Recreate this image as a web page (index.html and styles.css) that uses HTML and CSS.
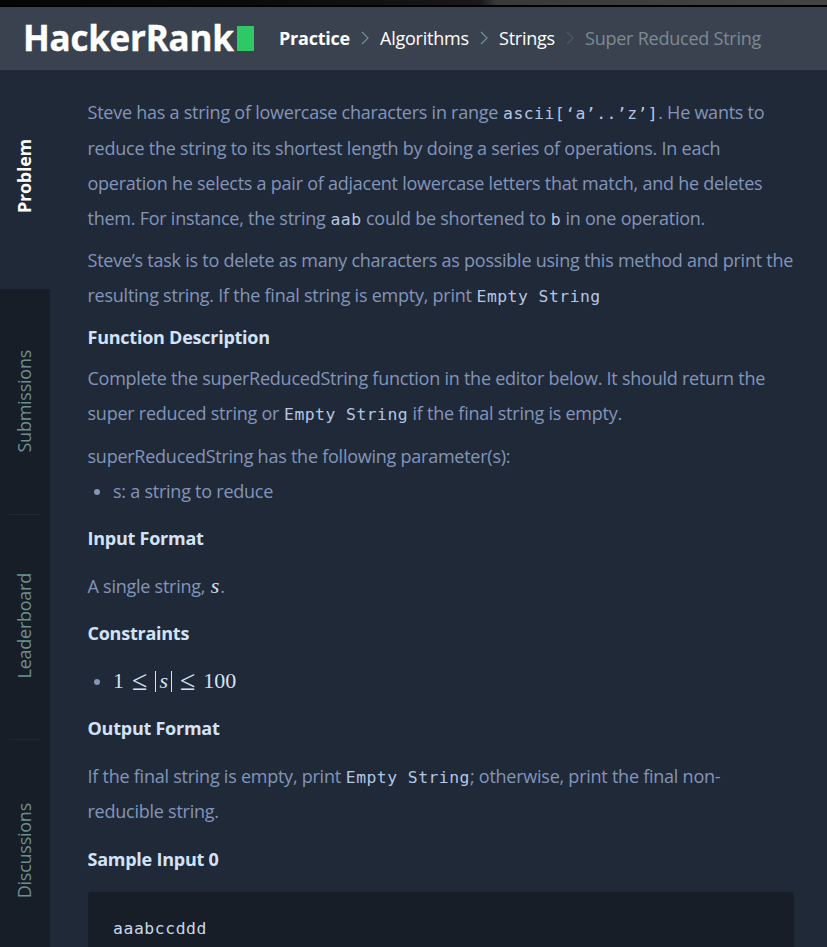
FILE: index.html
```html
<!DOCTYPE html>
<html lang="en">
<head>
<meta charset="utf-8">
<title>Super Reduced String</title>
<link rel="stylesheet" href="styles.css">
</head>
<body>
<div class="window-edge"></div>
<header class="topbar">
  <div class="logo"><span class="logo-text">HackerRank</span><span class="logo-block"></span></div>
  <nav class="crumbs">
    <a class="crumb current w1">Practice</a>
    <svg class="sep" viewBox="0 0 8 14"><path d="M1 1l6 6-6 6"/></svg>
    <a class="crumb w2">Algorithms</a>
    <svg class="sep" viewBox="0 0 8 14"><path d="M1 1l6 6-6 6"/></svg>
    <a class="crumb w3">Strings</a>
    <svg class="sep faint" viewBox="0 0 8 14"><path d="M1 1l6 6-6 6"/></svg>
    <span class="crumb last">Super Reduced String</span>
  </nav>
</header>
<div class="layout">
  <aside class="tabs">
    <div class="tab active"><span>Problem</span></div>
    <div class="tab"><span>Submissions</span></div>
    <div class="tab"><span>Leaderboard</span></div>
    <div class="tab"><span>Discussions</span></div>
  </aside>
  <main class="statement">
    <p>Steve has a string of lowercase characters in range <code>ascii[‘a’..’z’]</code>. He wants to<br>reduce the string to its shortest length by doing a series of operations. In each<br>operation he selects a pair of adjacent lowercase letters that match, and he deletes<br>them. For instance, the string <code>aab</code> could be shortened to <code>b</code> in one operation.</p>
    <p>Steve’s task is to delete as many characters as possible using this method and print the<br>resulting string. If the final string is empty, print <code>Empty String</code></p>
    <h3 class="tight">Function Description</h3>
    <p class="task">Complete the superReducedString function in the editor below. It should return the<br>super reduced string or <code>Empty String</code> if the final string is empty.</p>
    <p class="lead">superReducedString has the following parameter(s):</p>
    <ul><li>s: a string to reduce</li></ul>
    <h3>Input Format</h3>
    <p class="block">A single string, <i class="math">s</i>.</p>
    <h3>Constraints</h3>
    <ul><li><span class="math formula">1 <b>≤</b> <u></u><i>s</i><u></u> <b>≤</b> 100</span></li></ul>
    <h3>Output Format</h3>
    <p class="block output">If the final string is empty, print <code>Empty String</code>; otherwise, print the final non-<br>reducible string.</p>
    <h3>Sample Input 0</h3>
    <pre>aaabccddd</pre>
  </main>
</div>
</body>
</html>
```

FILE: styles.css
```css
* { box-sizing: border-box; }
html, body { height: 947px; overflow: hidden; }
body {
  margin: 0;
  display: flex;
  flex-direction: column;
  background: #202937;
  color: #8395ba;
  font-family: "Open Sans", sans-serif;
  font-size: 18px;
}
.window-edge {
  flex: none;
  height: 7px;
  border-bottom: 2px solid #000;
  background: linear-gradient(90deg, #060606 0, #0b0b0b 30%, #1a181a 58%, #393939 60%, #444 100%);
}
.topbar {
  flex: none;
  height: 63px;
  display: flex;
  align-items: center;
  padding: 0 0 2px 23px;
  background: #3b424f;
}
.logo { display: flex; align-items: center; width: 256px; }
.logo-text {
  width: 214px;
  color: #fff;
  font-size: 35px;
  font-weight: 700;
  line-height: 40px;
  letter-spacing: -0.25px;
  -webkit-text-stroke: 0.4px #fff;
  white-space: nowrap;
}
.logo-block { width: 17px; height: 25px; margin-top: 2px; background: #2ec866; }
.crumbs { display: flex; align-items: center; white-space: nowrap; }
.crumb { color: #fff; letter-spacing: -0.23px; line-height: 26px; }
.current { font-weight: 700; }
.w1 { width: 82px; }
.w2 { width: 100px; }
.w3 { width: 67px; }
.last { color: #7b8a92; }
.sep { width: 8px; height: 14px; margin-right: 11px; fill: none; stroke: #738f93; stroke-width: 1.2; }
.faint { stroke: #4c5964; }
.layout { flex: 1; min-height: 0; display: flex; }
.tabs { width: 50px; flex: none; display: flex; flex-direction: column; }
.tab {
  flex: none;
  height: 225px;
  display: flex;
  align-items: center;
  justify-content: center;
  padding: 0 2px 1px 0;
  position: relative;
  background: #171e27;
  color: #6c8f90;
  letter-spacing: -0.25px;
}
.tab.active { height: 219px; background: transparent; color: #fff; font-weight: 700; padding-bottom: 7px; }
.tab span { writing-mode: vertical-rl; transform: rotate(180deg); line-height: 24px; white-space: nowrap; }
.tab:not(.active)::after {
  content: "";
  position: absolute;
  left: 9px;
  right: 9px;
  bottom: -1px;
  z-index: 1;
  height: 1px;
  background: #1f2932;
}
.statement { width: 744px; padding: 25.4px 0 0 37.5px; white-space: nowrap; }
.statement p, .statement h3, .statement ul { margin: 0 0 6.9px; line-height: 35.2px; letter-spacing: -0.245px; }
.statement h3 { margin: 12px 0; color: #d2e2f8; font-size: 18px; font-weight: 700; }
.statement h3.tight { margin: 6px 0; }
.statement .task { margin: -0.6px 0 7.5px; }
.statement .lead, .statement ul { margin: 0; padding: 0; list-style: none; }
.statement .block { margin: 0; padding-top: 0.5px; }
.statement .output { line-height: 35.6px; padding-top: 1px; }
li { display: flex; align-items: center; height: 35.2px; }
li::before { content: ""; width: 6px; height: 6px; margin: 1px 13px 0 6.5px; border-radius: 50%; background: #8395ba; }
code, pre { font-family: "DejaVu Sans Mono", monospace; font-size: 16.4px; letter-spacing: 0.47px; line-height: 20px; color: #b5c6e6; }
code { margin-left: 0.5px; }
.math { font-family: "Liberation Serif", serif; color: #d5e2f5; font-size: 22px; line-height: 20px; letter-spacing: 0; }
p .math { margin: 0 1px; }
.formula { display: flex; align-items: center; gap: 8px; }
.formula b { font-weight: 400; font-size: 28px; }
.formula i { margin: 0 -5px; }
.formula u { width: 1px; height: 21px; background: #d5e2f5; }
pre { margin: 14.5px 0 0 0.5px; padding: 27px 25px; height: 90px; border-radius: 3px; background: #171e27; color: #c8d6ea; letter-spacing: 0.57px; }
```
